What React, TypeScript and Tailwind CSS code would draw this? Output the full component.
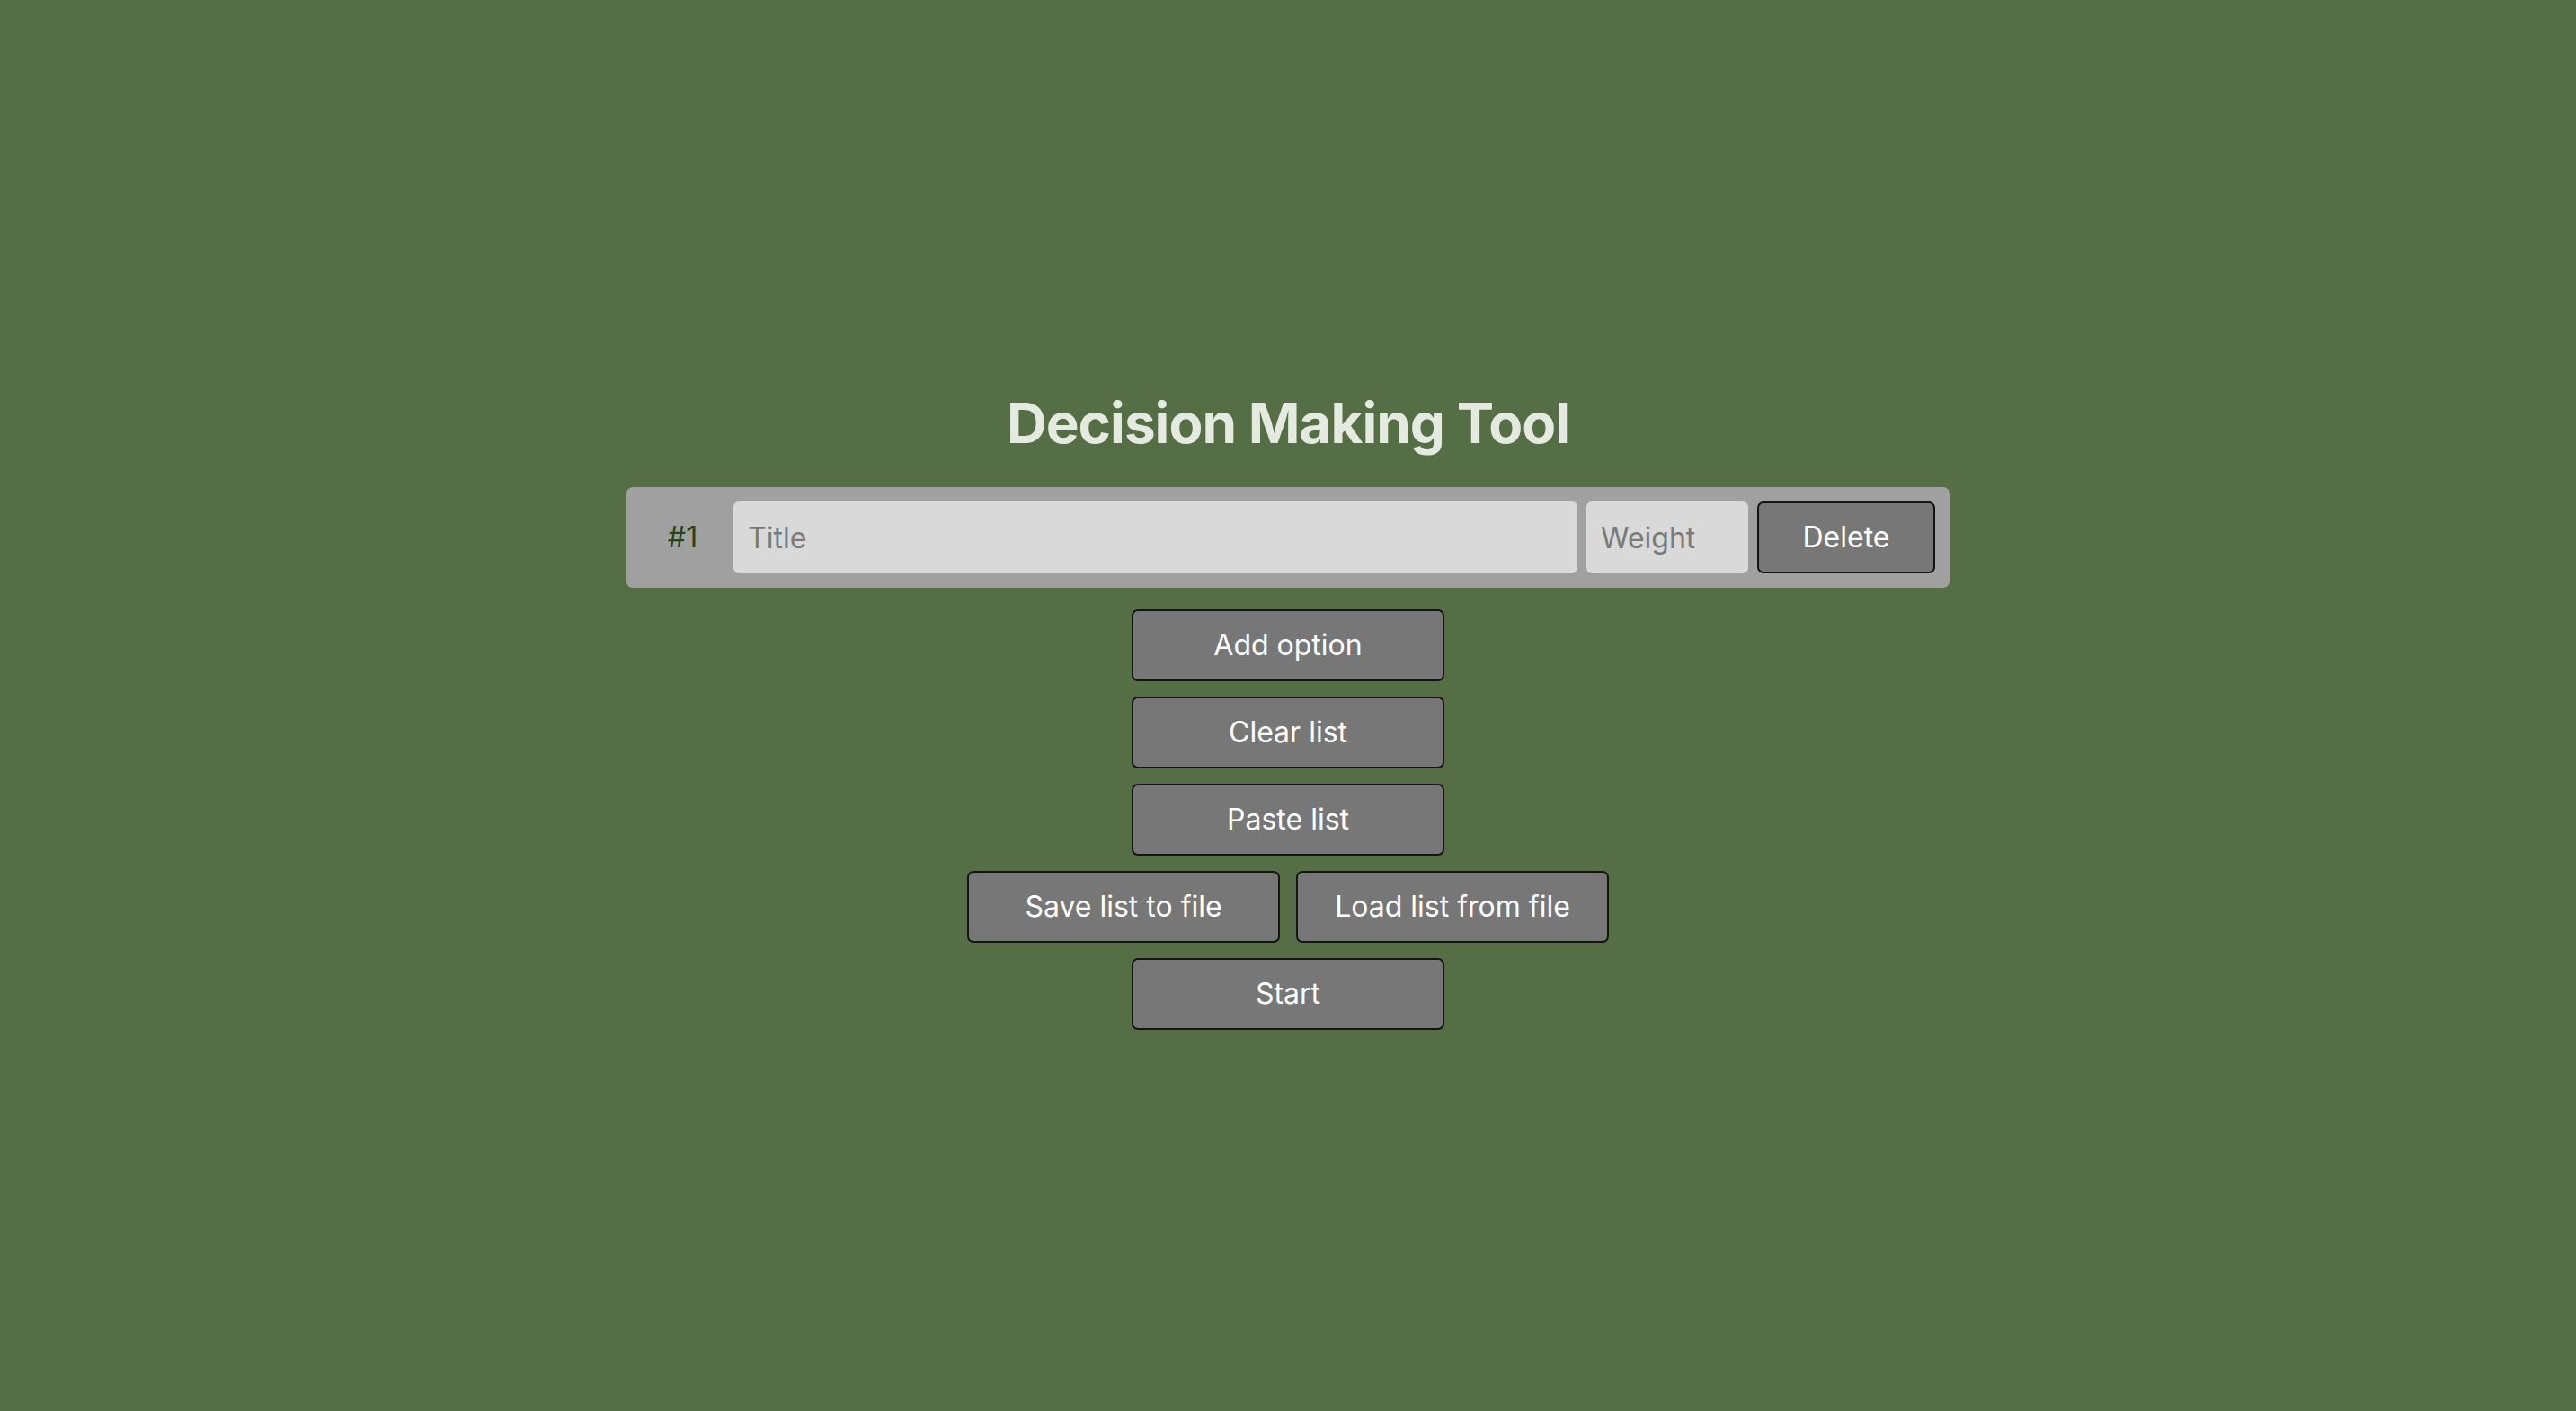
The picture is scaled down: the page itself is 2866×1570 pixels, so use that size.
import { useState } from "react";

interface Option {
  title: string;
  weight: string;
}

const btn =
  "h-[80px] w-[348px] rounded-[7px] border-2 border-[#141414] bg-[#777777] text-[32px] text-white";

const App = () => {
  const [options, setOptions] = useState<Option[]>([{ title: "", weight: "" }]);

  const addOption = () => setOptions([...options, { title: "", weight: "" }]);
  const clearList = () => setOptions([{ title: "", weight: "" }]);
  const removeOption = (i: number) =>
    setOptions(options.length > 1 ? options.filter((_, j) => j !== i) : options);

  return (
    <div
      className="flex min-h-screen flex-col items-center justify-center bg-[#566e46] pt-[8px]"
      style={{ fontFamily: "Inter, 'Liberation Sans', sans-serif" }}
    >
      <h1 className="mb-[33px] text-[62px] font-bold leading-[77px] tracking-[-1px] text-[#e4eadf]">
        Decision Making Tool
      </h1>
      <div className="flex w-[1472px] flex-col gap-[10px] rounded-[7px] bg-[#a0a0a0] p-[16px]">
        {options.map((opt, i) => (
          <div key={i} className="flex h-[80px] items-center gap-[10px]">
            <span className="w-[93px] text-center text-[32px] text-[#2a431c]">
              #{i + 1}
            </span>
            <input
              className="h-full flex-1 rounded-[6px] bg-[#d9d9d9] px-[16px] text-[32px] text-black outline-none placeholder:text-[#7a7a7a]"
              placeholder="Title"
              value={opt.title}
              onChange={(e) => {
                const next = [...options];
                next[i] = { ...opt, title: e.target.value };
                setOptions(next);
              }}
            />
            <input
              className="h-full w-[180px] rounded-[6px] bg-[#d9d9d9] px-[16px] text-[32px] text-black outline-none placeholder:text-[#7a7a7a]"
              placeholder="Weight"
              value={opt.weight}
              onChange={(e) => {
                const next = [...options];
                next[i] = { ...opt, weight: e.target.value };
                setOptions(next);
              }}
            />
            <button
              onClick={() => removeOption(i)}
              className="h-full w-[198px] rounded-[7px] border-2 border-[#141414] bg-[#777777] text-[32px] text-white"
            >
              Delete
            </button>
          </div>
        ))}
      </div>
      <div className="mt-[24px] flex flex-col items-center gap-[17px]">
        <button className={btn} onClick={addOption}>
          Add option
        </button>
        <button className={btn} onClick={clearList}>
          Clear list
        </button>
        <button className={btn}>Paste list</button>
        <div className="flex gap-[18px]">
          <button className={btn}>Save list to file</button>
          <button className={btn}>Load list from file</button>
        </div>
        <button className={btn}>Start</button>
      </div>
    </div>
  );
};

export default App;
